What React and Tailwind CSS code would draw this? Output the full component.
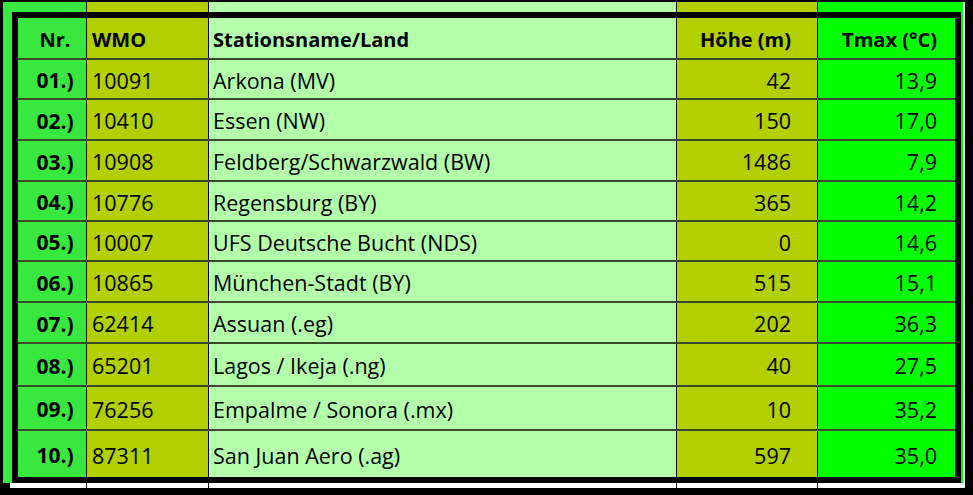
const rows = [
  ['01.)', '10091', 'Arkona (MV)', '42', '13,9', 'h-[40px] border-b-2'],
  ['02.)', '10410', 'Essen (NW)', '150', '17,0', 'h-[41px] border-b-2'],
  ['03.)', '10908', 'Feldberg/Schwarzwald (BW)', '1486', '7,9', 'h-[41px] border-b-2'],
  ['04.)', '10776', 'Regensburg (BY)', '365', '14,2', 'h-[40px] border-b-2'],
  ['05.)', '10007', 'UFS Deutsche Bucht (NDS)', '0', '14,6', 'h-[40px] border-b-2'],
  ['06.)', '10865', 'München-Stadt (BY)', '515', '15,1', 'h-[41px] border-b-2'],
  ['07.)', '62414', 'Assuan (.eg)', '202', '36,3', 'h-[41px] border-b-2'],
  ['08.)', '65201', 'Lagos / Ikeja (.ng)', '40', '27,5', 'h-[43px] border-b-2'],
  ['09.)', '76256', 'Empalme / Sonora (.mx)', '10', '35,2', 'h-[44px] border-b-2'],
  ['10.)', '87311', 'San Juan Aero (.ag)', '597', '35,0', 'h-[46px]'],
];

const colA = 'bg-[#39e83f]';
const colB = 'bg-[#b2cf00]';
const colC = 'bg-[#b4ffa9]';
const colE = 'bg-[#00ff00]';

function Row({ cells, cls, bold }) {
  const text = bold ? 'font-bold text-[20px] pt-[4px]' : 'font-normal text-[21.5px] pt-[3px]';
  const nr = bold ? 'text-[20px] pt-[4px]' : 'text-[21px] pt-[3px]';
  return (
    <div className={`flex border-[#3a4a2a] ${cls}`}>
      <div className={`w-[69px] shrink-0 border-r border-black ${colA} flex items-center justify-center pl-[6px] font-bold ${nr}`}>
        {cells[0]}
      </div>
      <div className={`w-[122px] shrink-0 border-r border-black ${colB} flex items-center pl-[5px] ${text}`}>
        {cells[1]}
      </div>
      <div className={`w-[468px] shrink-0 border-r border-black ${colC} flex items-center pl-[4px] ${text}`}>
        {cells[2]}
      </div>
      <div className={`w-[141px] shrink-0 border-r border-black ${colB} flex items-center justify-end pr-[26px] ${text}`}>
        {cells[3]}
      </div>
      <div className={`w-[137px] shrink-0 ${colE} flex items-center justify-end pr-[18px] ${text}`}>
        {cells[4]}
      </div>
    </div>
  );
}

export default function App() {
  return (
    <div className="w-[973px] h-[495px] bg-white border-black border-t-2 border-l-[3px] border-r-[8px] border-b-[7px] flex flex-col text-black leading-none font-['Open_Sans',sans-serif] overflow-hidden">
      {/* top strip above the frame */}
      <div className="flex h-[10px] shrink-0">
        <div className={`w-[84px] border-r border-black ${colA}`} />
        <div className={`w-[122px] border-r border-black ${colB}`} />
        <div className={`w-[468px] border-r border-black ${colC}`} />
        <div className={`w-[141px] border-r border-black ${colB}`} />
        <div className={`w-[145px] ${colE}`} />
        <div className="w-[2px] bg-white" />
      </div>

      {/* framed table */}
      <div className="flex shrink-0">
        <div className={`w-[9px] ${colA}`} />
        <div className="border-[6px] border-black">
          <Row cells={['Nr.', 'WMO', 'Stationsname/Land', 'Höhe (m)', 'Tmax (°C)']} cls="h-[42px] border-b-2" bold />
          {rows.map((r) => (
            <Row key={r[0]} cells={r} cls={r[5]} />
          ))}
        </div>
        <div className={`w-[2px] ${colE}`} />
        <div className="w-[2px] bg-white" />
      </div>

      {/* strip below the frame */}
      <div className="flex flex-1">
        <div className="w-[7px] bg-black" />
        <div className="w-[77px] border-r border-black bg-white" />
        <div className="w-[122px] border-r border-black bg-white" />
        <div className="w-[468px] border-r border-black bg-white" />
        <div className="w-[141px] border-r border-black bg-white" />
        <div className="w-[147px] bg-white" />
      </div>
    </div>
  );
}
